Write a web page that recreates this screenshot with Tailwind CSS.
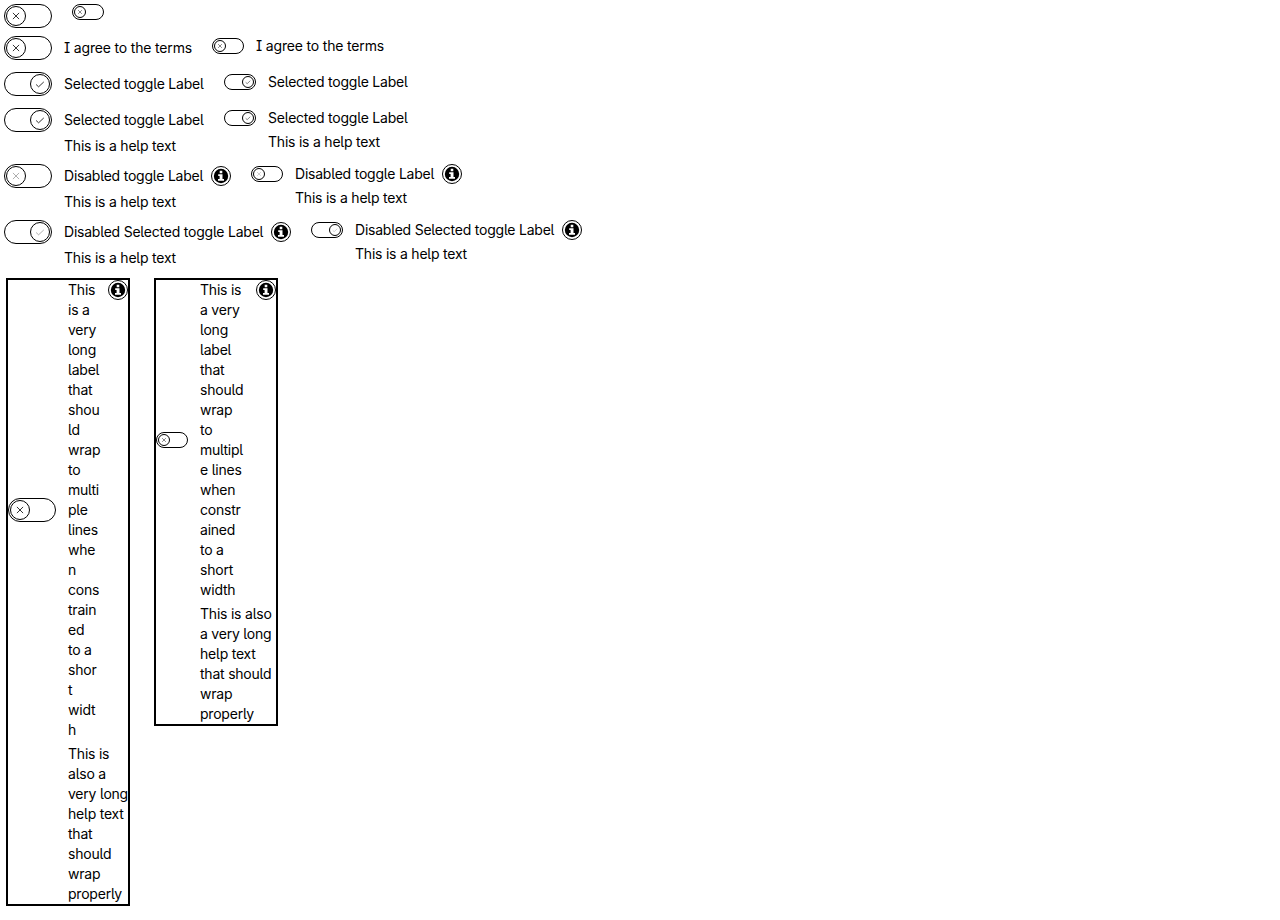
<!DOCTYPE html>
<html lang="en">
<head>
<meta charset="utf-8">
<title>Toggles</title>
<script src="https://cdn.jsdelivr.net/npm/@tailwindcss/browser@4"></script>
</head>
<body class="bg-white text-black font-[Inter,sans-serif] text-[14px] leading-5 tracking-[-0.22px] [font-feature-settings:'ss02'] whitespace-nowrap">
<svg class="hidden">
  <symbol id="x" viewBox="0 0 20 20"><path d="M6.9 6.9l6.2 6.2M13.1 6.9l-6.2 6.2" fill="none" stroke="currentColor" stroke-width="0.8"/></symbol>
  <symbol id="check" viewBox="0 0 20 20"><path d="M6.1 10.5l2.5 2.3 5.2-4.9" fill="none" stroke="currentColor" stroke-width="0.8"/></symbol>
  <symbol id="info" viewBox="0 0 20 20">
    <circle cx="10" cy="10" r="9.5" fill="none" stroke="#000" stroke-width="1"/>
    <circle cx="10" cy="10" r="7.2" fill="#000"/>
    <path d="M8.7 4.8h2.6v2.4H8.7zM7.2 8.2h4.3v4.9h1.5v1.7H7V13.1h1.6V9.9H7.2z" fill="#fff"/>
  </symbol>
</svg>
<main class="flex flex-col items-start pl-1 pt-1">
  <div class="flex items-start gap-5 h-8">
    <div class="flex w-12 h-6 shrink-0 items-center rounded-full border border-black px-px"><span class="size-5 rounded-full border border-black"><svg class="-m-px size-5"><use href="#x"/></svg></span></div>
    <div class="flex w-8 h-4 shrink-0 items-center rounded-full border border-black px-px"><span class="size-3 rounded-full border border-black"><svg class="-m-px size-3"><use href="#x"/></svg></span></div>
  </div>
  <div class="flex items-start gap-5 h-9 tracking-[-0.17px]">
    <div class="flex items-center gap-3">
      <div class="flex w-12 h-6 shrink-0 items-center rounded-full border border-black px-px"><span class="size-5 rounded-full border border-black"><svg class="-m-px size-5"><use href="#x"/></svg></span></div>
      <span class="w-32">I agree to the terms</span>
    </div>
    <div class="flex items-center gap-3">
      <div class="flex w-8 h-4 shrink-0 items-center rounded-full border border-black px-px"><span class="size-3 rounded-full border border-black"><svg class="-m-px size-3"><use href="#x"/></svg></span></div>
      <span class="w-32">I agree to the terms</span>
    </div>
  </div>
  <div class="flex items-start gap-5 h-9">
    <div class="flex items-center gap-3">
      <div class="flex w-12 h-6 shrink-0 items-center justify-end rounded-full border border-black px-px"><span class="size-5 rounded-full border border-black"><svg class="-m-px size-5"><use href="#check"/></svg></span></div>
      <span class="w-35">Selected toggle Label</span>
    </div>
    <div class="flex items-center gap-3">
      <div class="flex w-8 h-4 shrink-0 items-center justify-end rounded-full border border-black px-px"><span class="size-3 rounded-full border border-black"><svg class="-m-px size-3"><use href="#check"/></svg></span></div>
      <span class="w-35">Selected toggle Label</span>
    </div>
  </div>
  <div class="flex items-start gap-5 h-14">
    <div class="grid grid-cols-[48px_auto] gap-x-3 gap-y-1 items-center">
      <div class="flex w-12 h-6 items-center justify-end rounded-full border border-black px-px"><span class="size-5 rounded-full border border-black"><svg class="-m-px size-5"><use href="#check"/></svg></span></div>
      <span class="w-35">Selected toggle Label</span>
      <span class="col-start-2">This is a help text</span>
    </div>
    <div class="grid grid-cols-[32px_auto] gap-x-3 gap-y-1 items-center">
      <div class="flex w-8 h-4 items-center justify-end rounded-full border border-black px-px"><span class="size-3 rounded-full border border-black"><svg class="-m-px size-3"><use href="#check"/></svg></span></div>
      <span class="w-35">Selected toggle Label</span>
      <span class="col-start-2">This is a help text</span>
    </div>
  </div>
  <div class="flex items-start gap-5 h-14">
    <div class="grid grid-cols-[48px_auto] gap-x-3 gap-y-1 items-center">
      <div class="flex w-12 h-6 items-center rounded-full border border-black px-px"><span class="size-5 rounded-full border border-black text-black/40"><svg class="-m-px size-5"><use href="#x"/></svg></span></div>
      <span class="flex gap-2"><span class="w-[139px]">Disabled toggle Label</span><svg class="size-5"><use href="#info"/></svg></span>
      <span class="col-start-2">This is a help text</span>
    </div>
    <div class="grid grid-cols-[32px_auto] gap-x-3 gap-y-1 items-center">
      <div class="flex w-8 h-4 items-center rounded-full border border-black px-px"><span class="size-3 rounded-full border border-black text-black/40"><svg class="-m-px size-3"><use href="#x"/></svg></span></div>
      <span class="flex gap-2"><span class="w-[139px]">Disabled toggle Label</span><svg class="size-5"><use href="#info"/></svg></span>
      <span class="col-start-2">This is a help text</span>
    </div>
  </div>
  <div class="flex items-start gap-5 h-[58px]">
    <div class="grid grid-cols-[48px_auto] gap-x-3 gap-y-1 items-center">
      <div class="flex w-12 h-6 items-center justify-end rounded-full border border-black px-px"><span class="size-5 rounded-full border border-black text-black/40"><svg class="-m-px size-5"><use href="#check"/></svg></span></div>
      <span class="flex gap-2"><span class="w-[199px]">Disabled Selected toggle Label</span><svg class="size-5"><use href="#info"/></svg></span>
      <span class="col-start-2">This is a help text</span>
    </div>
    <div class="grid grid-cols-[32px_auto] gap-x-3 gap-y-1 items-center">
      <div class="flex w-8 h-4 items-center justify-end rounded-full border border-black px-px"><span class="size-3 rounded-full border border-black text-black/40"><svg class="-m-px size-3"><use href="#check"/></svg></span></div>
      <span class="flex gap-2"><span class="w-[199px]">Disabled Selected toggle Label</span><svg class="size-5"><use href="#info"/></svg></span>
      <span class="col-start-2">This is a help text</span>
    </div>
  </div>
  <div class="flex items-start gap-6 pl-0.5">
    <div class="w-[124px] border-2 border-black grid grid-cols-[48px_60px] gap-x-3 gap-y-1 items-center">
      <div class="flex w-12 h-6 items-center rounded-full border border-black px-px"><span class="size-5 rounded-full border border-black"><svg class="-m-px size-5"><use href="#x"/></svg></span></div>
      <div class="flex items-start gap-2"><span class="w-8">This<br>is a<br>very<br>long<br>label<br>that<br>shou<br>ld<br>wrap<br>to<br>multi<br>ple<br>lines<br>whe<br>n<br>cons<br>train<br>ed<br>to a<br>shor<br>t<br>widt<br>h</span><svg class="size-5 shrink-0"><use href="#info"/></svg></div>
      <span class="col-start-2">This is<br>also a<br>very long<br>help text<br>that<br>should<br>wrap<br>properly</span>
    </div>
    <div class="w-[124px] border-2 border-black grid grid-cols-[32px_76px] gap-x-3 gap-y-1 items-center">
      <div class="flex w-8 h-4 items-center rounded-full border border-black px-px"><span class="size-3 rounded-full border border-black"><svg class="-m-px size-3"><use href="#x"/></svg></span></div>
      <div class="flex items-start gap-2"><span class="w-12">This is<br>a very<br>long<br>label<br>that<br>should<br>wrap<br>to<br>multipl<br>e lines<br>when<br>constr<br>ained<br>to a<br>short<br>width</span><svg class="size-5 shrink-0"><use href="#info"/></svg></div>
      <span class="col-start-2">This is also<br>a very long<br>help text<br>that should<br>wrap<br>properly</span>
    </div>
  </div>
</main>
</body>
</html>
